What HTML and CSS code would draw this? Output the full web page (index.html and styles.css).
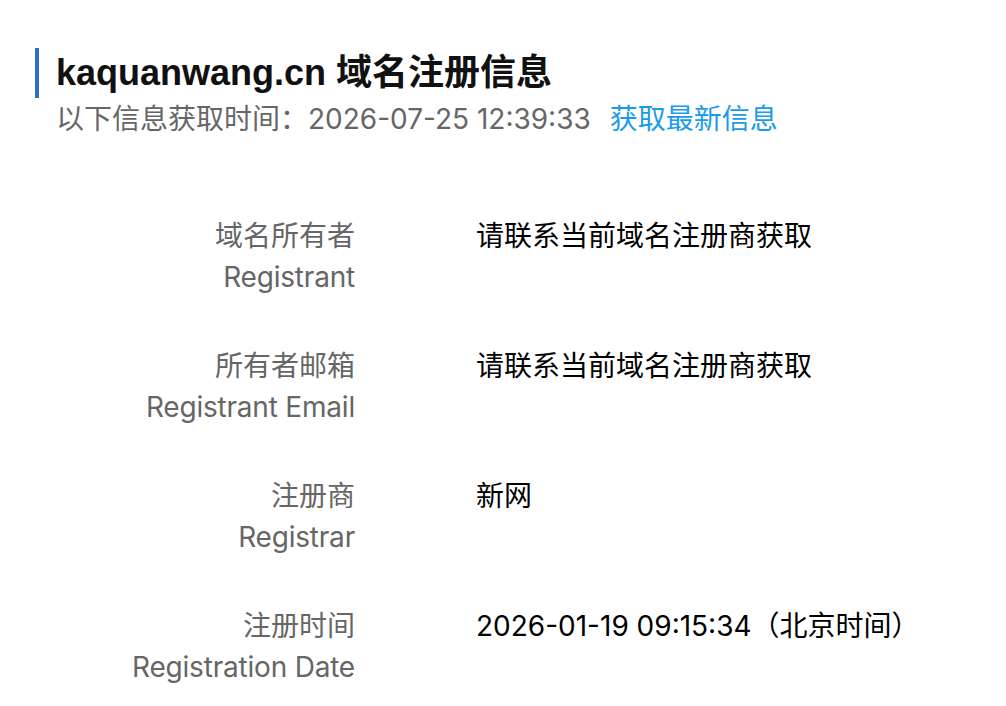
FILE: index.html
```html
<!DOCTYPE html>
<html lang="zh-CN">
<head>
<meta charset="utf-8">
<title>kaquanwang.cn 域名注册信息</title>
<link rel="stylesheet" href="styles.css">
</head>
<body>
<div class="page">
  <header class="head">
    <h1 class="title">kaquanwang.cn 域名注册信息</h1>
    <p class="sub">以下信息获取时间：2026-07-25 12:39:33<a class="refresh" href="#">获取最新信息</a></p>
  </header>
  <div class="info">
    <div class="row">
      <div class="label"><span>域名所有者</span><span>Registrant</span></div>
      <div class="value">请联系当前域名注册商获取</div>
    </div>
    <div class="row">
      <div class="label"><span>所有者邮箱</span><span>Registrant Email</span></div>
      <div class="value">请联系当前域名注册商获取</div>
    </div>
    <div class="row">
      <div class="label"><span>注册商</span><span>Registrar</span></div>
      <div class="value">新网</div>
    </div>
    <div class="row">
      <div class="label"><span>注册时间</span><span>Registration Date</span></div>
      <div class="value">2026-01-19 09:15:34（北京时间）</div>
    </div>
  </div>
</div>
</body>
</html>
```

FILE: styles.css
```css
* { box-sizing: border-box; }
html, body { margin: 0; padding: 0; background: #fff; }
body {
  font-family: "Inter", "Noto Sans CJK SC", sans-serif;
  color: #000;
  font-size: 28px;
}
.page { padding-top: 48px; }
.head { padding-left: 35px; }
.title {
  margin: 0;
  font-family: "Liberation Sans", "Noto Sans CJK SC", sans-serif;
  font-size: 36px;
  line-height: 50px;
  font-weight: 700;
  border-left: 4px solid #2d6fc6;
  padding-left: 17px;
  color: #111;
}
.sub {
  margin: 0;
  padding-left: 21px;
  font-size: 28px;
  line-height: 42px;
  color: #666;
}
.refresh {
  color: #1a9bea;
  text-decoration: none;
  margin-left: 19px;
}
.info {
  margin-top: 76px;
  display: flex;
  flex-direction: column;
  gap: 48px;
}
.row {
  display: grid;
  grid-template-columns: 355px 1fr;
  column-gap: 121px;
  line-height: 41px;
}
.label {
  display: flex;
  flex-direction: column;
  align-items: flex-end;
  color: #666;
}
.label span:last-child { letter-spacing: -0.2px; }
.value { color: #000; }
```
